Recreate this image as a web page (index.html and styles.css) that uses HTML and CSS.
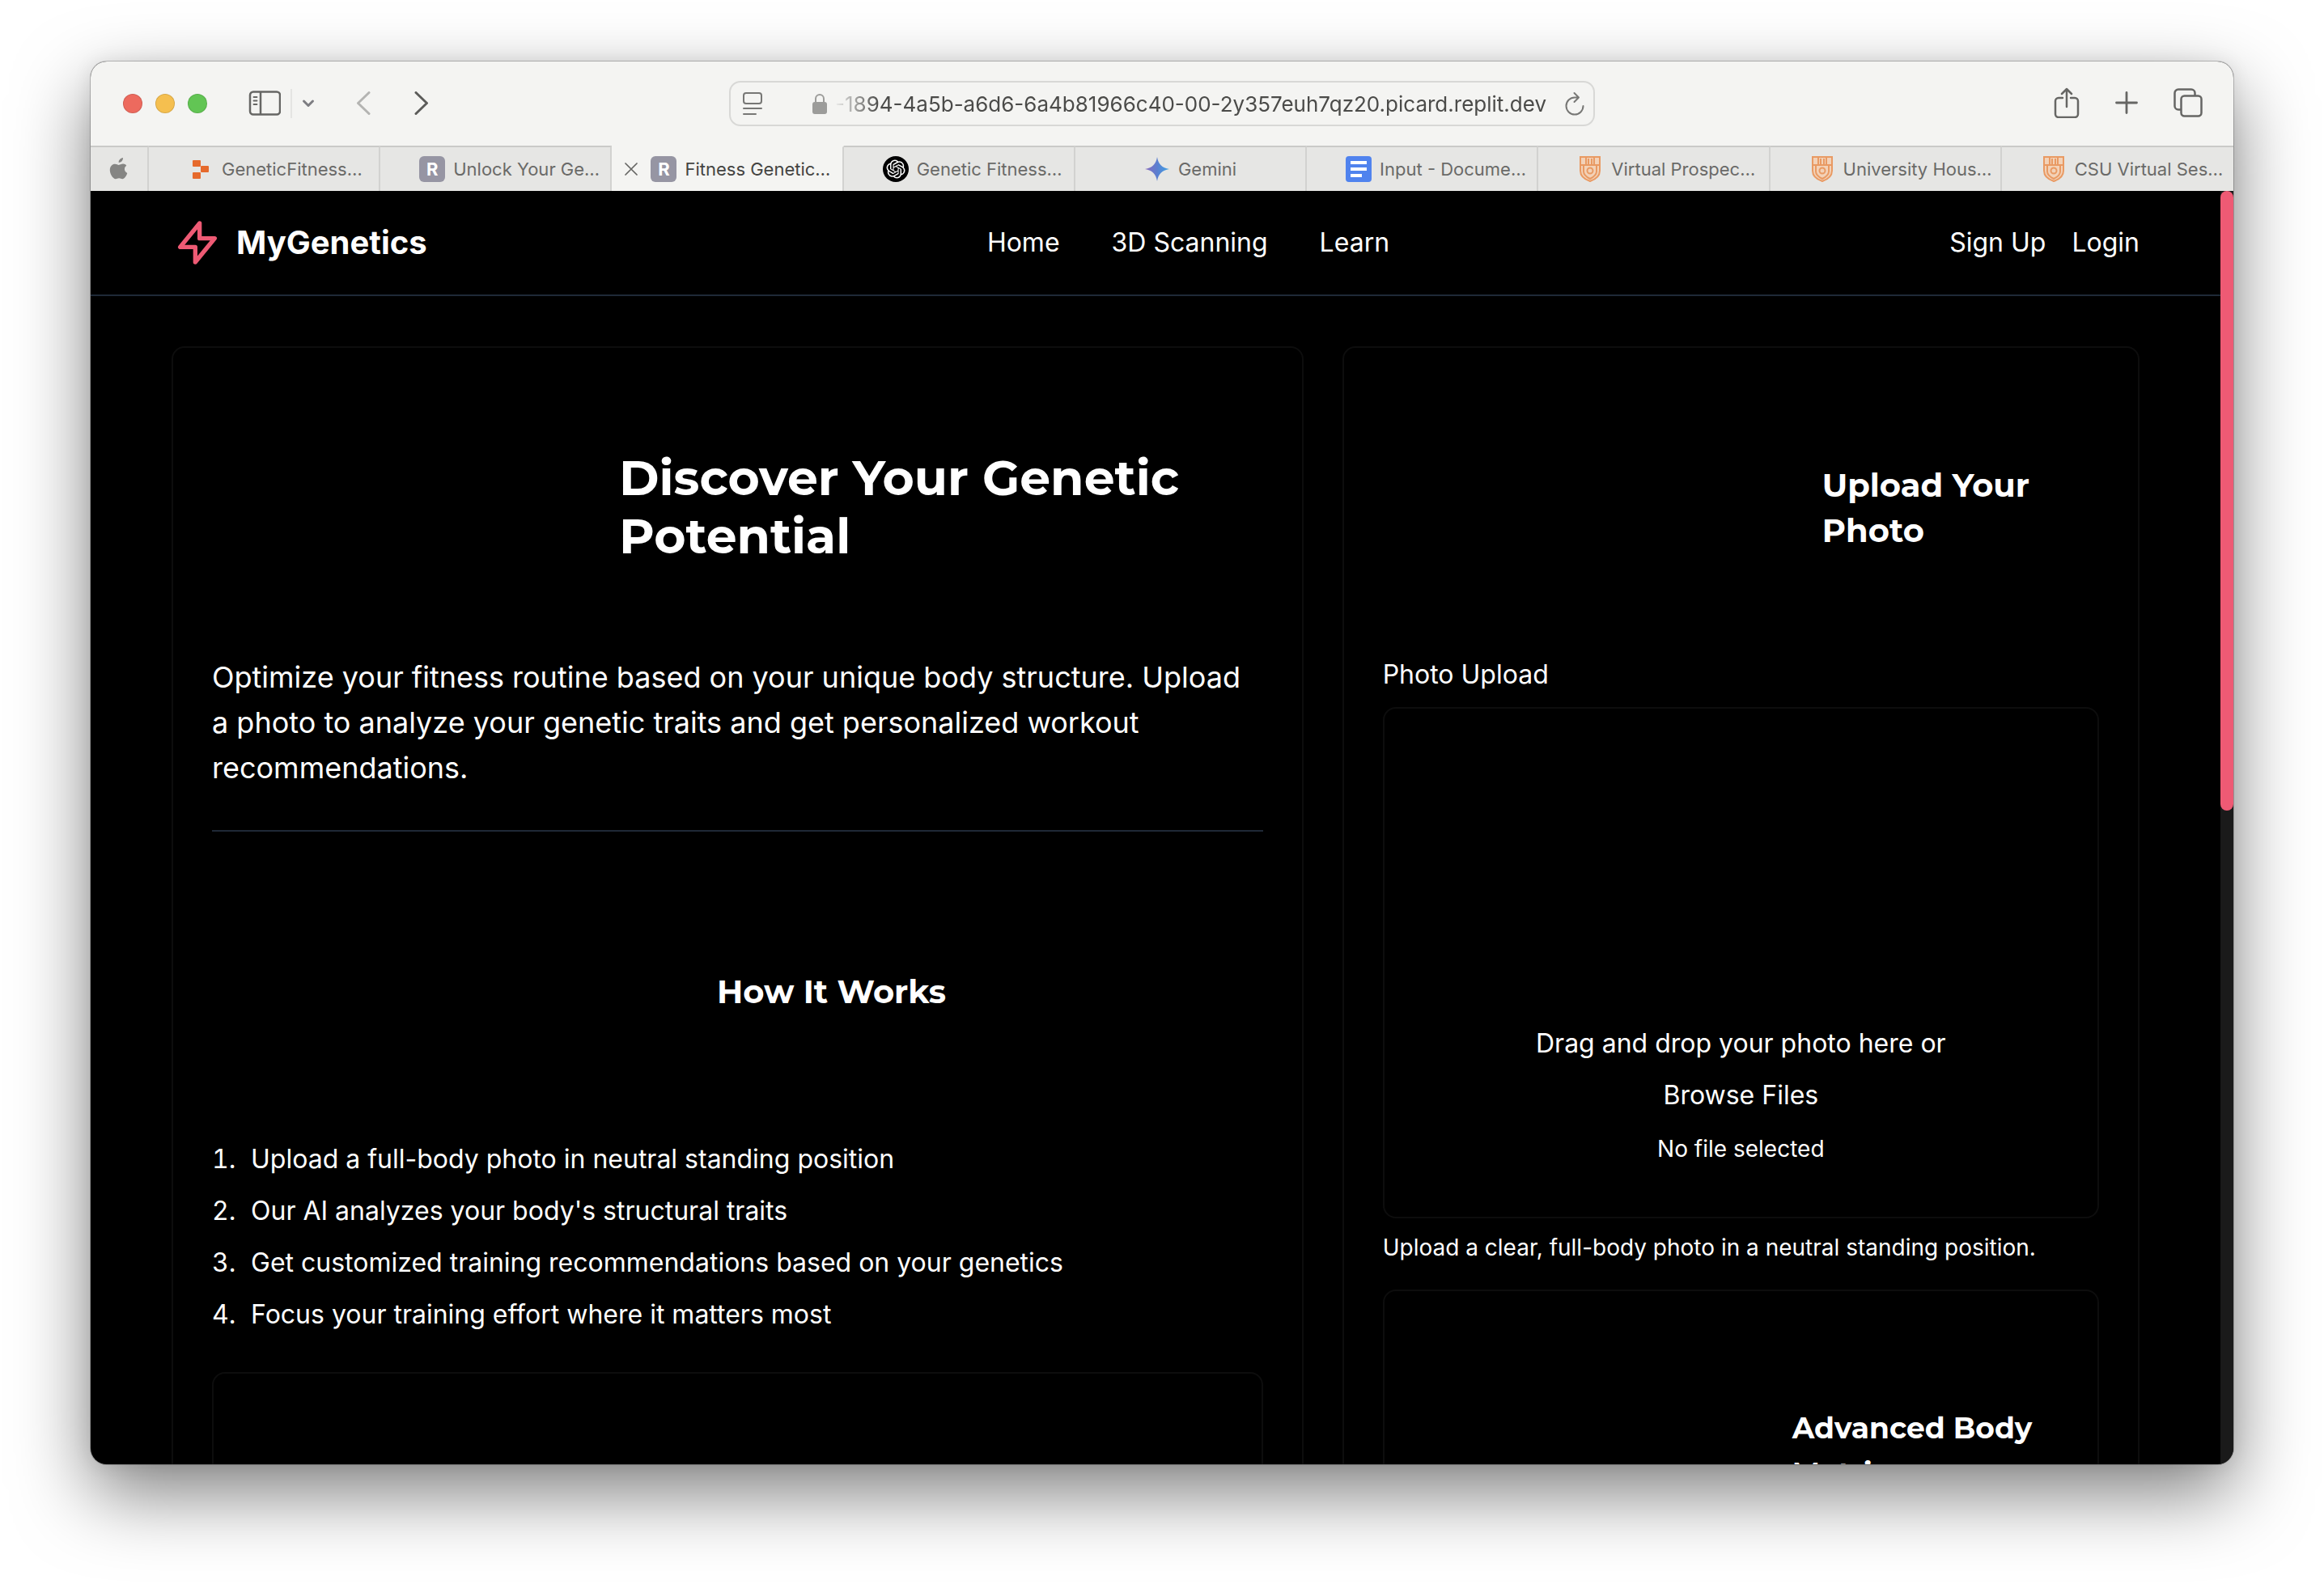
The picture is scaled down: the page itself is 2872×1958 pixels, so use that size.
FILE: index.html
```html
<!DOCTYPE html>
<html lang="en">
<head>
<meta charset="utf-8">
<title>Fitness Genetics</title>
<link rel="stylesheet" href="styles.css">
</head>
<body>
<svg class="defs" aria-hidden="true">
  <symbol id="shield" viewBox="0 0 26 32">
    <path d="M1 1h24v17c0 7-6 11-12 13C7 29 1 25 1 18z" fill="#f3d2b8" stroke="#e99a63" stroke-width="2"/>
    <path d="M1 11h24M8 2v8M18 2v8M11 3v7M15 3v7M5 12v7c0 4 4 7 8 9 4-2 8-5 8-9v-7" fill="none" stroke="#e99a63" stroke-width="2"/>
    <circle cx="13" cy="18" r="3.500" fill="none" stroke="#e99a63" stroke-width="2"/>
  </symbol>
</svg>
<div class="window">
  <div class="toolbar">
    <div class="toolbar-left">
      <div class="lights"><span class="light red"></span><span class="light yellow"></span><span class="light green"></span></div>
      <button class="icon-btn" aria-label="Sidebar"><svg width="40" height="32" viewBox="0 0 40 32" fill="none" stroke="#666664" stroke-width="2.500"><rect x="2" y="1.500" width="37" height="28" rx="4"/><path d="M15 2v28"/><path d="M6.500 8h4M6.500 12.500h4M6.500 17h4" stroke-width="1.800" stroke-linecap="round"/></svg></button>
      <span class="divider"></span>
      <button class="icon-btn" aria-label="Tab groups"><svg width="16" height="12" viewBox="0 0 16 12" fill="none" stroke="#7d7d82" stroke-width="3" stroke-linecap="round" stroke-linejoin="round"><path d="M2.500 3L8 8.500 13.500 3"/></svg></button>
      <button class="icon-btn back" aria-label="Back"><svg width="20" height="30" viewBox="0 0 20 30" fill="none" stroke="#b4b4b2" stroke-width="3" stroke-linecap="round" stroke-linejoin="round"><path d="M17 1.500L3.500 14.500 17 27.500"/></svg></button>
      <button class="icon-btn" aria-label="Forward"><svg width="20" height="30" viewBox="0 0 20 30" fill="none" stroke="#5c5c5a" stroke-width="3" stroke-linecap="round" stroke-linejoin="round"><path d="M3 1.500l13.500 13L3 27.500"/></svg></button>
    </div>
    <div class="address">
      <svg width="24" height="28" viewBox="0 0 24 28" fill="none" stroke="#777775" stroke-width="2" stroke-linecap="round"><rect x="1" y="1" width="22" height="13" rx="3"/><path d="M1 20h22M1 27h15"/></svg>
      <svg class="lock" width="18" height="26" viewBox="0 0 18 26"><path d="M4 12V7a5 5 0 0 1 10 0v5" fill="none" stroke="#9c9c9a" stroke-width="2"/><rect y="11" width="18" height="15" rx="3" fill="#9c9c9a"/></svg>
      <input class="url" aria-label="Address" value="-1894-4a5b-a6d6-6a4b81966c40-00-2y357euh7qz20.picard.replit.dev">
      <button class="icon-btn" aria-label="Reload"><svg width="26" height="30" viewBox="0 0 26 30" fill="none" stroke="#777775" stroke-width="2" stroke-linecap="round" stroke-linejoin="round"><path d="M18 7.500h-5A10.500 10.500 0 1 0 23.500 18M12.500 2L18 7.500 12.500 13"/></svg></button>
    </div>
    <div class="toolbar-right">
      <button class="icon-btn" aria-label="Share"><svg width="32" height="38" viewBox="0 0 32 38" fill="none" stroke="#666664" stroke-width="2.500" stroke-linecap="round" stroke-linejoin="round"><path d="M11 13H6a4 4 0 0 0-4 4v16a4 4 0 0 0 4 4h20a4 4 0 0 0 4-4V17a4 4 0 0 0-4-4h-5M16 24V2M10 8l6-6 6 6"/></svg></button>
      <button class="icon-btn" aria-label="New tab"><svg width="28" height="28" viewBox="0 0 28 28" stroke="#666664" stroke-width="2.800" stroke-linecap="round"><path d="M14 1.500v25M1.500 14h25"/></svg></button>
      <button class="icon-btn" aria-label="Tab overview"><svg width="36" height="36" viewBox="0 0 36 36" fill="none" stroke="#666664" stroke-width="2.500"><rect x="9.500" y="9.500" width="25" height="25" rx="4"/><path d="M9 26.500H6a4.500 4.500 0 0 1-4.500-4.500V6A4.500 4.500 0 0 1 6 1.500h16A4.500 4.500 0 0 1 26.500 6v3"/></svg></button>
    </div>
  </div>
  <div class="tabs">
    <button class="tab pinned" aria-label="Apple"><svg width="24" height="28" viewBox="0 0 24 28" fill="#858583"><path d="M17 0c.3 3-2.400 6-5.300 6C11.400 3 14 .4 17 0zM21.300 9.800c-3.500 2.200-3 7.400 1 9.100-1 3-3.400 7.300-6 7.300-1.600 0-2.200-1-4.200-1s-2.700 1-4.200 1C4.500 26.200.8 20 .8 15.300c0-5 3.200-7.600 6.300-7.600 2 0 3.500 1.200 4.800 1.200 1.200 0 3-1.400 5.400-1.300 1.500 0 3.100.8 4 2.200z"/></svg></button>
    <button class="tab"><svg width="32" height="32" viewBox="0 0 32 32" fill="#e66a2c"><rect x="6" y="5" width="10" height="8" rx="1"/><rect x="16" y="12" width="10" height="8" rx="1"/><rect x="6" y="20" width="10" height="8" rx="1"/></svg><span>GeneticFitness…</span></button>
    <button class="tab"><b class="letter">R</b><span>Unlock Your Ge…</span></button>
    <button class="tab active"><svg class="close" width="16" height="16" viewBox="0 0 16 16" stroke="#666664" stroke-width="1.700" stroke-linecap="round"><path d="M1 1l14 14M15 1L1 15"/></svg><b class="letter">R</b><span>Fitness Genetic…</span></button>
    <button class="tab"><svg width="32" height="32" viewBox="0 0 32 32"><circle cx="16" cy="16" r="16"/><path transform="translate(4.500 4.500) scale(.96)" fill="#fff" d="M22.2819 9.8211a5.9847 5.9847 0 0 0-.5157-4.9108 6.0462 6.0462 0 0 0-6.5098-2.9A6.0651 6.0651 0 0 0 4.9807 4.1818a5.9847 5.9847 0 0 0-3.9977 2.9 6.0462 6.0462 0 0 0 .7427 7.0966 5.98 5.98 0 0 0 .511 4.9107 6.051 6.051 0 0 0 6.5146 2.9001A5.9847 5.9847 0 0 0 13.2599 24a6.0557 6.0557 0 0 0 5.7718-4.2058 5.9894 5.9894 0 0 0 3.9977-2.9001 6.0557 6.0557 0 0 0-.7475-7.0729zm-9.022 12.6081a4.4755 4.4755 0 0 1-2.8764-1.0408l.1419-.0804 4.7783-2.7582a.7948.7948 0 0 0 .3927-.6813v-6.7369l2.02 1.1686a.071.071 0 0 1 .038.052v5.5826a4.504 4.504 0 0 1-4.4945 4.4944zm-9.6607-4.1254a4.4708 4.4708 0 0 1-.5346-3.0137l.142.0852 4.783 2.7582a.7712.7712 0 0 0 .7806 0l5.8428-3.3685v2.3324a.0804.0804 0 0 1-.0332.0615L9.74 19.9502a4.4992 4.4992 0 0 1-6.1408-1.6464zM2.3408 7.8956a4.485 4.485 0 0 1 2.3655-1.9728V11.6a.7664.7664 0 0 0 .3879.6765l5.8144 3.3543-2.0201 1.1685a.0757.0757 0 0 1-.071 0l-4.8303-2.7865A4.504 4.504 0 0 1 2.3408 7.872zm16.5963 3.8558L13.1038 8.364 15.1192 7.2a.0757.0757 0 0 1 .071 0l4.8303 2.7913a4.4944 4.4944 0 0 1-.6765 8.1042v-5.6772a.79.79 0 0 0-.407-.667zm2.0107-3.0231l-.142-.0852-4.7735-2.7818a.7759.7759 0 0 0-.7854 0L9.409 9.2297V6.8974a.0662.0662 0 0 1 .0284-.0615l4.8303-2.7866a4.4992 4.4992 0 0 1 6.6802 4.66zM8.3065 12.863l-2.02-1.1638a.0804.0804 0 0 1-.038-.0567V6.0742a4.4992 4.4992 0 0 1 7.3757-3.4537l-.142.0805L8.704 5.459a.7948.7948 0 0 0-.3927.6813zm1.0976-2.3654l2.602-1.4998 2.6069 1.4998v2.9994l-2.5974 1.4997-2.6067-1.4997Z"/></svg><span>Genetic Fitness…</span></button>
    <button class="tab short"><svg width="32" height="32" viewBox="0 0 32 32"><defs><linearGradient id="gem"><stop stop-color="#8a6bbd"/><stop offset=".5" stop-color="#5b7fd0"/><stop offset="1" stop-color="#3fa3e6"/></linearGradient></defs><path d="M16 1c1.500 9 6 13.500 15 15-9 1.500-13.500 6-15 15C14.500 22 10 17.500 1 16 10 14.500 14.500 10 16 1z" fill="url(#gem)"/></svg><span>Gemini</span></button>
    <button class="tab"><svg width="32" height="32" viewBox="0 0 32 32"><rect width="32" height="32" rx="4" fill="#5083ee"/><path d="M6 8h20M6 16h20M6 24h14" stroke="#fff" stroke-width="4"/></svg><span>Input - Docume…</span></button>
    <button class="tab"><svg width="32" height="32"><use href="#shield"/></svg><span>Virtual Prospec…</span></button>
    <button class="tab"><svg width="32" height="32"><use href="#shield"/></svg><span>University Hous…</span></button>
    <button class="tab"><svg width="32" height="32"><use href="#shield"/></svg><span>CSU Virtual Ses…</span></button>
  </div>
  <div class="viewport">
    <div class="page">
      <header class="site-header">
        <a class="brand" href="#"><svg width="64" height="64" viewBox="0 0 24 24" fill="none" stroke="#ee5a74" stroke-width="2" stroke-linecap="round" stroke-linejoin="round"><path d="M13 10V3L4 14h7v7l9-11h-7z"/></svg><span>MyGenetics</span></a>
        <nav class="nav"><a href="#">Home</a><a href="#">3D Scanning</a><a href="#">Learn</a></nav>
        <div class="auth"><a href="#">Sign Up</a><a href="#">Login</a></div>
      </header>
      <main class="grid">
        <section class="card intro">
          <div class="head head-main"><h1>Discover Your Genetic Potential</h1></div>
          <p class="lead">Optimize your fitness routine based on your unique body structure. Upload a photo to analyze your genetic traits and get personalized workout recommendations.</p>
          <hr>
          <div class="head head-steps"><h2>How It Works</h2></div>
          <ol class="steps">
            <li>Upload a full-body photo in neutral standing position</li>
            <li>Our AI analyzes your body's structural traits</li>
            <li>Get customized training recommendations based on your genetics</li>
            <li>Focus your training effort where it matters most</li>
          </ol>
          <div class="card"></div>
        </section>
        <section class="card upload">
          <div class="head head-upload"><h2>Upload Your Photo</h2></div>
          <label class="label" for="photo">Photo Upload</label>
          <div class="card drop">
            <p>Drag and drop your photo here or</p>
            <button class="browse" id="photo">Browse Files</button>
            <p class="small">No file selected</p>
          </div>
          <p class="small hint">Upload a clear, full-body photo in a neutral standing position.</p>
          <div class="card metrics"><div class="head head-metrics"><h3>Advanced Body Metrics</h3></div></div>
        </section>
      </main>
    </div>
    <div class="scrollbar"><div class="thumb"></div></div>
  </div>
</div>
</body>
</html>
```
FILE: styles.css
```css
* { box-sizing: border-box; margin: 0; }
body {
  height: 100vh;
  padding: 76px 112px 148px;
  background: #fff;
  font-family: Inter, "Liberation Sans", sans-serif;
  overflow: hidden;
}
button, input { font: inherit; color: inherit; background: none; border: 0; padding: 0; }
a { color: inherit; text-decoration: none; }
svg { display: block; flex: none; }
.defs { position: absolute; width: 0; height: 0; }

.window {
  display: flex;
  flex-direction: column;
  height: 100%;
  border-radius: 20px;
  overflow: hidden;
  background: #000;
  box-shadow: 0 0 0 1px rgba(0, 0, 0, .22), 0 36px 92px rgba(0, 0, 0, .5), 0 0 24px rgba(0, 0, 0, .08);
}

.toolbar {
  display: grid;
  grid-template-columns: 1fr 1070px 1fr;
  align-items: center;
  height: 104px;
  flex: none;
  background: #f4f4f2;
}
.toolbar-left { display: flex; align-items: center; padding-left: 40px; }
.lights { display: flex; gap: 16px; margin-right: 51px; }
.light { width: 24px; height: 24px; border-radius: 50%; border: 1px solid rgba(0, 0, 0, .12); }
.red { background: #ed6a5e; }
.yellow { background: #f5bf4f; }
.green { background: #62c554; }
.divider { width: 2px; height: 36px; margin: 0 12px; background: #e4e4e2; }
.back { margin: 0 52px 0 50px; }
.address {
  display: flex;
  align-items: center;
  height: 56px;
  padding: 0 10px 0 15px;
  border: 2px solid #d8d8d6;
  border-radius: 14px;
}
.lock { margin-left: 62px; }
.url {
  flex: 1;
  min-width: 0;
  height: 48px;
  margin: 0 22px 0 8px;
  font-size: 26px;
  text-align: right;
  color: #4b4b49;
  -webkit-mask-image: linear-gradient(90deg, transparent, #000 56px);
  mask-image: linear-gradient(90deg, transparent, #000 56px);
}
.toolbar-right { display: flex; align-items: center; justify-content: flex-end; gap: 44px; padding: 0 38px 2px 0; }

.tabs {
  display: grid;
  grid-template-columns: 72px repeat(9, minmax(0, 1fr));
  height: 56px;
  flex: none;
  background: #e6e6e4;
}
.tab {
  display: flex;
  align-items: center;
  gap: 10px;
  min-width: 0;
  padding-left: 48px;
  border-top: 2px solid #cacac8;
  border-right: 2px solid #d2d2d0;
  font-size: 22px;
  white-space: nowrap;
  color: #6a6a68;
}
.tab.pinned, .tab.short { justify-content: center; padding: 0; }
.tab.active { padding-left: 16px; background: #f4f4f2; border-top-color: #f4f4f2; color: #444442; }
.tab:last-child { border-right: 0; }
.close { margin-right: 6px; }
.letter {
  flex: none;
  width: 32px;
  height: 32px;
  border-radius: 6px;
  background: #9695a3;
  color: #fff;
  font-size: 22px;
  line-height: 32px;
  text-align: center;
}

.viewport { display: flex; flex: 1; min-height: 0; overflow: hidden; }
.page { flex: 1; min-width: 0; color: #fff; font-size: 32px; line-height: 52px; overflow: hidden; }
.scrollbar { flex: none; width: 16px; background: #1a1a1a; }
.thumb { height: 766px; border-radius: 8px; background: #ee5a74; }

.site-header {
  display: flex;
  align-items: center;
  justify-content: space-between;
  height: 130px;
  padding: 0 100px;
  border-bottom: 2px solid #1f2937;
}
.brand { display: flex; align-items: center; gap: 16px; font-size: 40px; font-weight: 700; }
.nav { display: flex; gap: 64px; }
.auth { display: flex; gap: 32px; }

.grid { display: grid; grid-template-columns: repeat(12, 1fr); gap: 48px; padding: 62px 100px; }
.card { min-height: 400px; padding: 48px; border: 2px solid #0d0d0d; border-radius: 16px; }
.intro { grid-column: span 7; }
.upload { grid-column: span 5; }
.head { display: flex; align-items: center; }
h1, h2, h3 { flex: 1; font-family: Montserrat, Inter, sans-serif; font-weight: 700; }
h1 { font-size: 60px; line-height: 72px; }
h2 { font-size: 40px; line-height: 56px; }
h3 { font-size: 36px; line-height: 56px; }
.head-main { height: 298px; padding-left: 503px; margin-bottom: 33px; }
.lead { font-size: 36px; line-height: 56px; }
hr { height: 2px; margin: 49px 0; border: 0; background: #1f2937; }
.head-steps { height: 298px; padding-left: 624px; }
.steps { list-style: none; padding: 0; counter-reset: step; margin: 32px 0 45px; display: grid; gap: 12px; }
.steps li { display: flex; counter-increment: step; }
.steps li::before { content: counter(step) "."; width: 48px; font-variant-numeric: tabular-nums; }
.head-upload { height: 300px; padding: 0 60px 0 543px; margin-bottom: 30px; }
.label { display: block; margin-bottom: 14px; }
.drop { display: flex; flex-direction: column; align-items: center; justify-content: flex-end; height: 632px; gap: 12px; padding-bottom: 58px; }
.drop .small { margin-top: 2px; }
.browse { line-height: 52px; }
.small { font-size: 28px; }
.hint { margin: 10px 0 26px; }
.metrics { height: 560px; }
.head-metrics { height: 298px; padding-left: 456px; }
```
